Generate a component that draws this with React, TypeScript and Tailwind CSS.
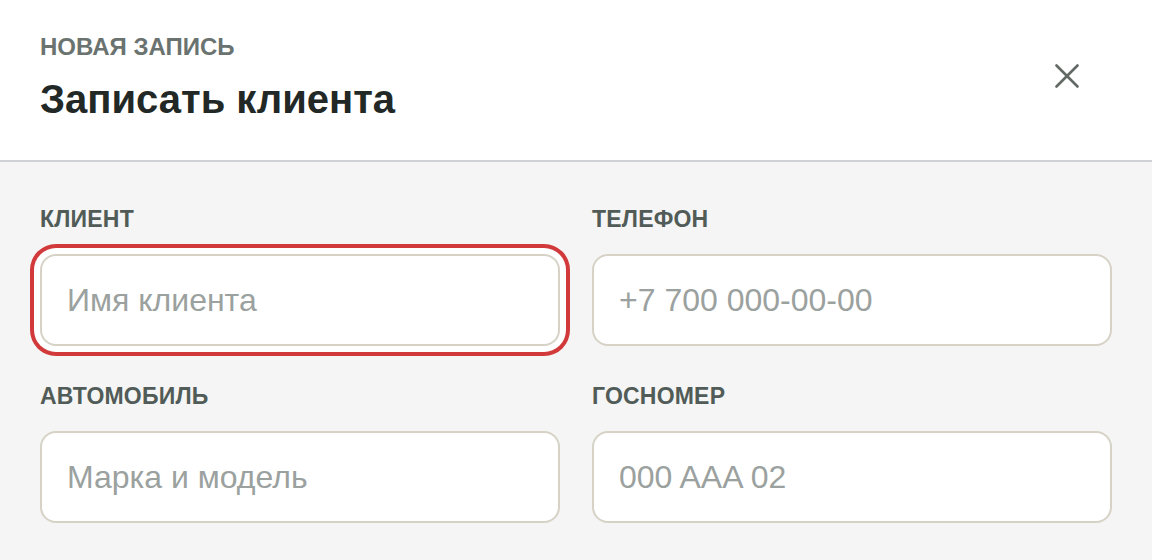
import React from 'react';

const fields = [
  { label: 'Клиент', placeholder: 'Имя клиента', focused: true },
  { label: 'Телефон', placeholder: '+7 700 000-00-00' },
  { label: 'Автомобиль', placeholder: 'Марка и модель' },
  { label: 'Госномер', placeholder: '000 AAA 02' },
];

const CloseIcon = () => (
  <svg width="24" height="24" viewBox="0 0 24 24" fill="none" stroke="#626a66" strokeWidth="2.6" strokeLinecap="round">
    <path d="M1.5 1.5 L22.5 22.5" />
    <path d="M22.5 1.5 L1.5 22.5" />
  </svg>
);

const App = () => {
  return (
    <div className="w-[1152px] h-[560px] overflow-hidden bg-[#f4f5f4] font-['Liberation_Sans',Arial,sans-serif]">
      <div className="flex items-start justify-between bg-white border-b-2 border-[#d0d1d5] pl-10 pr-[73px] pt-[35px] pb-[41px]">
        <div>
          <div className="text-[24px] leading-none font-bold uppercase text-[#6a736f]">Новая запись</div>
          <h2 className="mt-5 text-[40px] leading-none font-bold text-[#222826]">Записать клиента</h2>
        </div>
        <button className="mt-[29px] p-0">
          <CloseIcon />
        </button>
      </div>

      <div className="grid grid-cols-2 gap-x-8 gap-y-[39px] px-10 pt-[46px]">
        {fields.map((f) => (
          <div key={f.label}>
            <label className="block text-[23px] leading-none font-bold uppercase tracking-[0.2px] text-[#515b57]">
              {f.label}
            </label>
            <input
              placeholder={f.placeholder}
              className={
                'mt-[23px] block w-full h-[92px] rounded-2xl border-2 border-[#d7d2c6] bg-white px-[25px] text-[32px] text-[#222826] placeholder:text-[#9ba19e] outline-none ' +
                (f.focused ? 'shadow-[0_0_0_6px_#ffffff,0_0_0_10px_#d1393a]' : '')
              }
            />
          </div>
        ))}
      </div>
    </div>
  );
};

export default App;
